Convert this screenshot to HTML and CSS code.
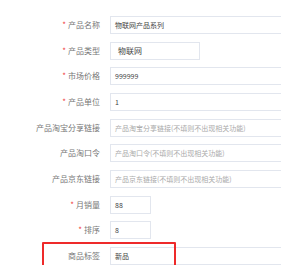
FILE: index.html
```html
<!DOCTYPE html>
<html lang="en">
<head>
	<meta charset="UTF-8">
	<title>产品编辑</title>
	<link rel="stylesheet" href="styles.css">
</head>
<body>
<div class="form">
	<div class="row"><label class="req">产品名称</label><div class="field"><span class="val">物联网产品系列</span></div></div>
	<div class="row"><label class="req">产品类型</label><div class="field mid"><span class="val sel">物联网</span></div></div>
	<div class="row"><label class="req">市场价格</label><div class="field"><span class="val">999999</span></div></div>
	<div class="row"><label class="req">产品单位</label><div class="field"><span class="val">1</span></div></div>
	<div class="row"><label>产品淘宝分享链接</label><div class="field"><span class="ph">产品淘宝分享链接(不填则不出现相关功能)</span></div></div>
	<div class="row"><label>产品淘口令</label><div class="field"><span class="ph">产品淘口令(不填则不出现相关功能)</span></div></div>
	<div class="row"><label>产品京东链接</label><div class="field"><span class="ph">产品京东链接(不填则不出现相关功能)</span></div></div>
	<div class="row"><label class="req">月销量</label><div class="field small"><span class="val">88</span></div></div>
	<div class="row"><label class="req">排序</label><div class="field small"><span class="val">8</span></div></div>
	<div class="row mark"><label>商品标签</label><div class="field"><span class="val">新品</span></div></div>
</div>
</body>
</html>
```
FILE: styles.css
```css
html,body{margin:0;padding:0;overflow:hidden;}
body{background:#fff;font-family:"Noto Sans CJK SC","Liberation Sans",sans-serif;}
.form{padding-top:16px;display:flex;flex-direction:column;gap:7.67px;}
.row{display:grid;grid-template-columns:100px 1fr;column-gap:10px;align-items:center;height:18px;position:relative;}
.row label{text-align:right;font-size:8px;color:#777;line-height:18px;white-space:nowrap;}
.row label.req::before{content:"*";color:#f04040;margin-right:2px;}
.field{height:18px;box-sizing:border-box;border:1px solid #e2e6ee;border-right:none;display:flex;align-items:center;padding-left:4px;min-width:0;overflow:hidden;}
.field.mid{width:90px;border-right:1px solid #e2e6ee;}
.field.small{width:41px;border-right:1px solid #e2e6ee;}
.val{font-size:7px;color:#444;white-space:nowrap;}
.val.sel{font-size:8px;padding-left:3px;}
.ph{font-size:7px;color:#aaa;white-space:nowrap;}
.mark::after{content:"";position:absolute;left:42px;top:-5px;width:134px;height:26px;box-sizing:border-box;border:2px solid #ee2a2a;border-radius:1px;}
```
